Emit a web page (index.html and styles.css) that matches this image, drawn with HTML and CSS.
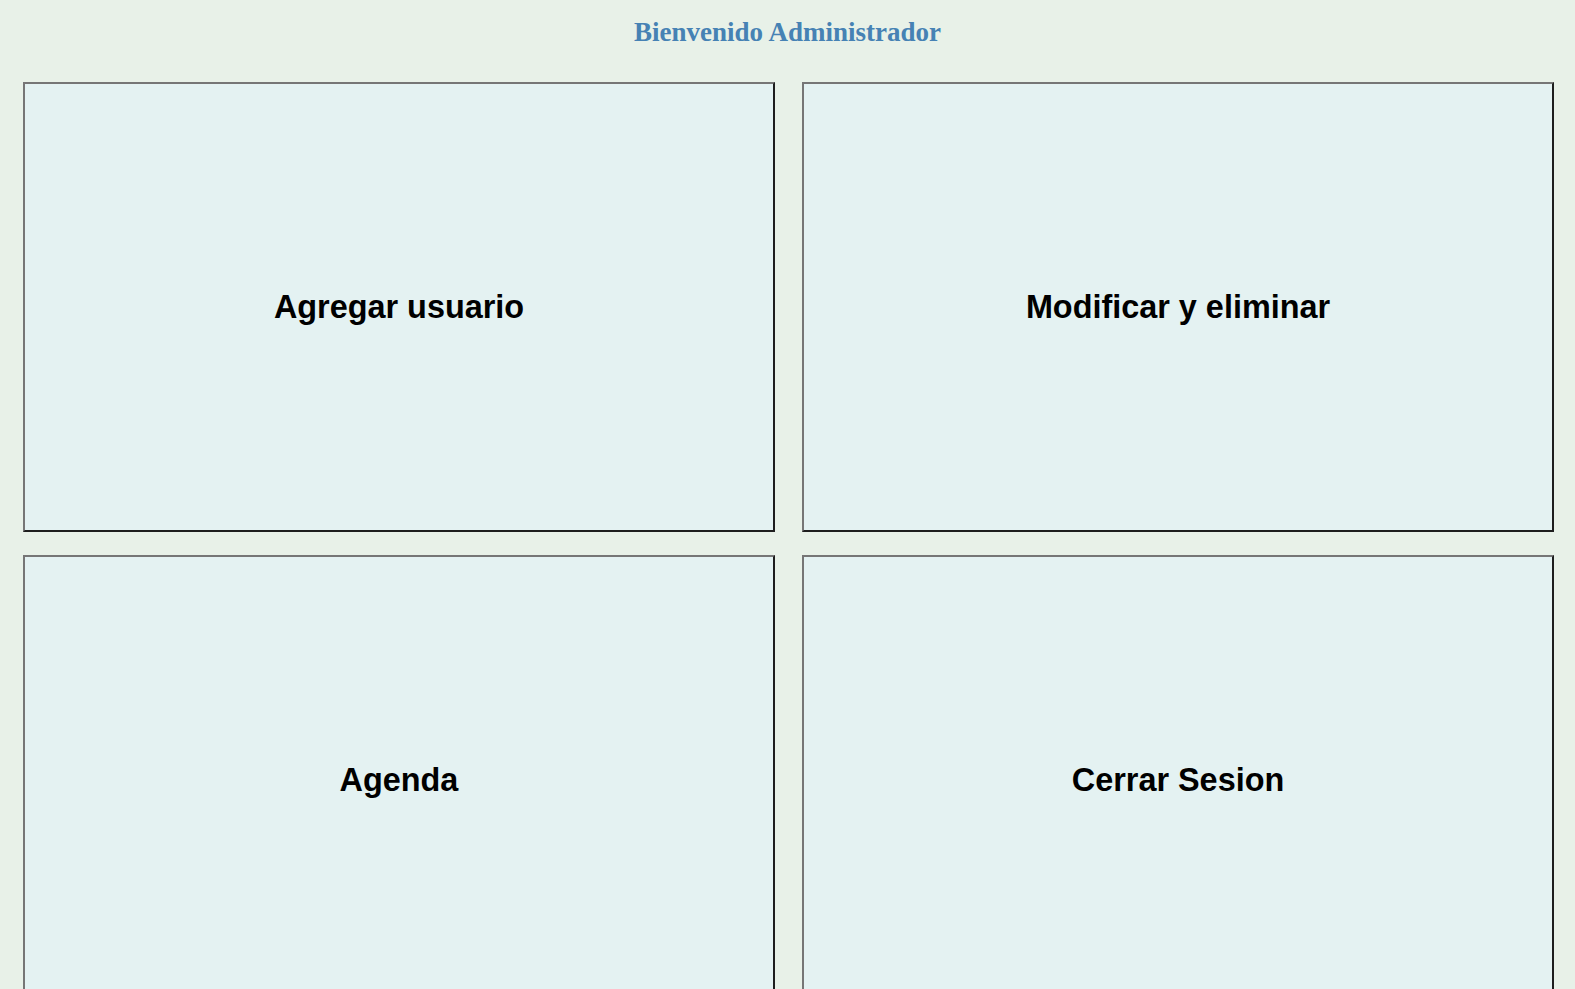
FILE: index.html
```html
<!DOCTYPE html>
<html lang="es">
<head>
<meta charset="utf-8">
<title>Bienvenido Administrador</title>
<link rel="stylesheet" href="styles.css">
</head>
<body>
<header class="header">
  <h1 class="title">Bienvenido Administrador</h1>
</header>
<main class="grid">
  <button class="card">Agregar usuario</button>
  <button class="card">Modificar y eliminar</button>
  <button class="card">Agenda</button>
  <button class="card">Cerrar Sesion</button>
</main>
</body>
</html>
```

FILE: styles.css
```css
html, body {
  margin: 0;
  padding: 0;
  background: #e8f1e8;
}

body {
  font-family: "Liberation Sans", Arial, sans-serif;
}

.header {
  height: 82px;
  display: flex;
  justify-content: center;
  align-items: flex-start;
}

.title {
  margin: 14px 0 0 0;
  font-family: "Liberation Serif", "Times New Roman", serif;
  font-weight: bold;
  font-size: 27px;
  line-height: 36px;
  color: #4682b4;
}

.grid {
  display: grid;
  grid-template-columns: 752px 752px;
  grid-auto-rows: 450px;
  column-gap: 27px;
  row-gap: 23px;
  padding: 0 21px 0 23px;
}

.card {
  margin: 0;
  padding: 0;
  background: #e4f2f2;
  border-style: solid;
  border-width: 2px;
  border-color: #767676 #1e1e1e #1e1e1e #767676;
  font-family: "Liberation Sans", Arial, sans-serif;
  font-weight: bold;
  font-size: 32.4px;
  color: #000;
  display: flex;
  align-items: center;
  justify-content: center;
  cursor: pointer;
}
```
